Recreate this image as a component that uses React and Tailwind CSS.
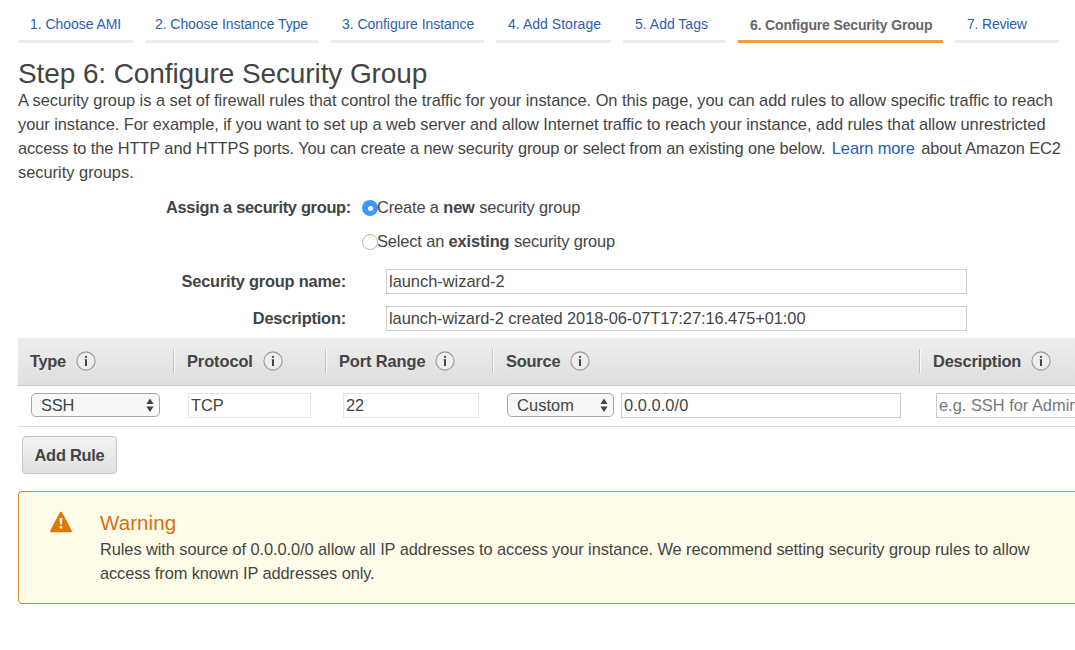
import { useState } from 'react';

const steps = [
  { label: '1. Choose AMI', width: 'w-[115px]', spacing: 'pl-3 tracking-[-0.05px]' },
  { label: '2. Choose Instance Type', width: 'w-[174px]', spacing: 'pl-[10px] tracking-[-0.07px]' },
  { label: '3. Configure Instance', width: 'w-[153px]', spacing: 'pl-[11px] tracking-[-0.04px]' },
  { label: '4. Add Storage', width: 'w-[115px]', spacing: 'pl-3 tracking-[0.03px]' },
  { label: '5. Add Tags', width: 'w-[103px]', spacing: 'pl-3' },
  { label: '6. Configure Security Group', width: 'w-[205px]', spacing: 'pl-3 tracking-[-0.16px]', active: true },
  { label: '7. Review', width: 'w-[104px]', spacing: 'pl-3 tracking-[-0.2px]' }
];

const InfoIcon = () => (
  <svg className="h-5 w-5 shrink-0" viewBox="0 0 20 20" fill="none">
    <circle cx="10" cy="10" r="9.1" fill="#eee" stroke="#999" strokeWidth="1.1" />
    <path d="M9 4.900h2v1.900H9zM9 8.300h2v6.700H9z" fill="#444" />
    <path d="M8.300 8.700H9" stroke="#777" strokeWidth="0.8" />
  </svg>
);

const Stepper = () => (
  <nav className="flex gap-3 pl-[18px] h-[43px]">
    {steps.map((step) => (
      <a
        key={step.label}
        className={`shrink-0 whitespace-nowrap border-b-3 text-sm leading-5 ${step.width} ${step.spacing} ${
          step.active
            ? 'pt-[15px] font-bold text-[#666] border-[#f29d38]'
            : 'pt-[14px] text-[#2b5fad] border-[#ededed]'
        }`}
      >
        {step.label}
      </a>
    ))}
  </nav>
);

const Radio = ({ checked, onChange, children }) => (
  <label className="flex h-6 items-center whitespace-nowrap">
    <input type="radio" name="group" checked={checked} onChange={onChange} className="sr-only" />
    <span
      className={`mt-[2px] flex h-4 w-4 items-center justify-center rounded-full ${
        checked ? 'bg-[#3b99fc]' : 'border border-[#b5b5b5] bg-white'
      }`}
    >
      {checked && <span className="h-[5px] w-[5px] rounded-full bg-white" />}
    </span>
    <span className="-ml-px tracking-[-0.13px]">{children}</span>
  </label>
);

const Select = ({ value, className }) => (
  <button
    type="button"
    className={`flex h-6 shrink-0 items-center justify-between rounded-[5px] border border-[#a6a6a6] bg-[#f8f8f8] pl-[9px] pr-[5px] ${className}`}
  >
    <span>{value}</span>
    <svg className="h-4 w-2" viewBox="0 0 8 16" fill="#444">
      <path d="M4 1.6 7.6 7H.4zM4 15 .4 9.6h7.2z" />
    </svg>
  </button>
);

const HeaderCell = ({ label, className, last }) => (
  <div className={`flex h-[24px] shrink-0 items-center font-bold ${className} ${last ? '' : 'border-r border-[#c2c2c2] shadow-[1px_0_0_#fafafa]'}`}>
    <span className="mr-[10px] whitespace-nowrap">{label}</span>
    <InfoIcon />
  </div>
);

export default function App() {
  const [mode, setMode] = useState('new');
  const field = 'shrink-0 border bg-white pl-[2px] outline-none text-[#444]';

  return (
    <div className="h-[650px] w-[1075px] overflow-hidden bg-white font-['Liberation_Sans',Arial,sans-serif] text-[16.4px] leading-6 text-[#444]">
      <Stepper />

      <h1 className="mt-[16px] ml-[18px] h-[29px] w-fit whitespace-nowrap text-[28px] leading-[30px] tracking-[-0.1px]">
        Step 6: Configure Security Group
      </h1>
      <div className="ml-[18px] whitespace-nowrap">
        <span className="block w-fit tracking-[-0.027px]">A security group is a set of firewall rules that control the traffic for your instance. On this page, you can add rules to allow specific traffic to reach</span>
        <span className="block w-fit tracking-[-0.055px]">your instance. For example, if you want to set up a web server and allow Internet traffic to reach your instance, add rules that allow unrestricted</span>
        <span className="block w-fit tracking-[-0.096px]">
          access to the HTTP and HTTPS ports. You can create a new security group or select from an existing one below.{' '}
          <a className="mx-[2px] text-[#1f5fb8]">Learn more</a> about Amazon EC2
        </span>
        <span className="block w-fit">security groups.</span>
      </div>

      {/* Security group details */}
      <div className="mt-[11px] flex">
        <div className="w-[351px] text-right font-bold tracking-[-0.3px]">Assign a security group:</div>
        <div className="ml-[11px] flex flex-col gap-[10px]">
          <Radio checked={mode === 'new'} onChange={() => setMode('new')}>
            Create a <b>new</b> security group
          </Radio>
          <Radio checked={mode === 'existing'} onChange={() => setMode('existing')}>
            Select an <b>existing</b> security group
          </Radio>
        </div>
      </div>
      <div className="mt-[16px] flex items-center">
        <label className="w-[346px] text-right font-bold leading-[23px] tracking-[-0.2px]">Security group name:</label>
        <input className={`${field} ml-[40px] h-[25px] w-[581px] border-[#ccc]`} defaultValue="launch-wizard-2" />
      </div>
      <div className="mt-[12px] flex items-center">
        <label className="w-[346px] text-right font-bold leading-[23px] tracking-[-0.2px]">Description:</label>
        <input
          className={`${field} ml-[40px] h-[25px] w-[581px] border-[#ccc] tracking-[-0.06px]`}
          defaultValue="launch-wizard-2 created 2018-06-07T17:27:16.475+01:00"
        />
      </div>

      {/* Rules table */}
      <div className="mt-[7px] ml-[18px]">
        <div className="flex h-[48px] items-center border-b border-[#c8c8c8] bg-linear-to-b from-[#eee] to-[#dedede] pb-[2px]">
          <HeaderCell label="Type" className="w-[156px] pl-3 tracking-[-0.3px]" />
          <HeaderCell label="Protocol" className="w-[152px] pl-[13px] tracking-[-0.08px]" />
          <HeaderCell label="Port Range" className="w-[167px] pl-[13px] tracking-[-0.1px]" />
          <HeaderCell label="Source" className="w-[427px] pl-[13px] tracking-[-0.2px]" />
          <HeaderCell label="Description" className="w-[156px] pl-[13px] tracking-[-0.18px]" last />
        </div>
        <div className="flex h-[41px] items-center border-b border-[#ddd] pb-[2px]">
          <Select value="SSH" className="ml-[13px] w-[129px] tracking-[-0.2px]" />
          <input className={`${field} ml-[28px] h-[25px] w-[123px] border-[#e6e6e6]`} defaultValue="TCP" />
          <input className={`${field} ml-[32px] h-[25px] w-[136px] border-[#e6e6e6]`} defaultValue="22" />
          <Select value="Custom" className="ml-[28px] w-[107px] tracking-[0.1px]" />
          <input className={`${field} ml-[7px] h-[25px] w-[280px] border-[#ccc] tracking-[0.06px]`} defaultValue="0.0.0.0/0" />
          <input
            className={`${field} ml-[35px] h-[25px] w-[280px] border-[#ccc] placeholder:text-[#777]`}
            placeholder="e.g. SSH for Admin Desktop"
          />
        </div>
      </div>

      <button
        type="button"
        className="mt-[9px] ml-[22px] flex h-[38px] w-[95px] items-center justify-center whitespace-nowrap rounded-[4px] border border-[#c4c4c4] bg-linear-to-b from-[#f3f3f3] to-[#e0e0e0] font-bold tracking-[-0.25px]"
      >
        Add Rule
      </button>

      {/* Open source address warning */}
      <div className="mt-[17px] ml-[18px] flex h-[113px] w-[1100px] rounded-[4px] border border-[#cf8a35] bg-[#fffde9] pt-[19px] pl-[31px]">
        <svg className="h-[22px] w-[22px] shrink-0" viewBox="0 0 22 22">
          <path d="M11 .8c.6 0 1 .4 1.3 1l9.3 17.5c.6 1 .1 1.9-1 1.9H1.4c-1.100 0-1.600-.9-1-1.900L9.700 1.800c.3-.6.7-1 1.300-1z" fill="#e07700" />
          <path d="M9.600 7h2.800l-.4 6.500h-2zM9.700 15h2.600v2.600H9.700z" fill="#fffde9" />
        </svg>
        <div className="ml-[28px] whitespace-nowrap">
          <h2 className="w-fit text-[20.5px] leading-6 tracking-[0.1px] text-[#d96f10]">Warning</h2>
          <span className="mt-[2px] block w-fit tracking-[-0.078px]">Rules with source of 0.0.0.0/0 allow all IP addresses to access your instance. We recommend setting security group rules to allow</span>
          <span className="block w-fit tracking-[-0.1px]">access from known IP addresses only.</span>
        </div>
      </div>
    </div>
  );
}
